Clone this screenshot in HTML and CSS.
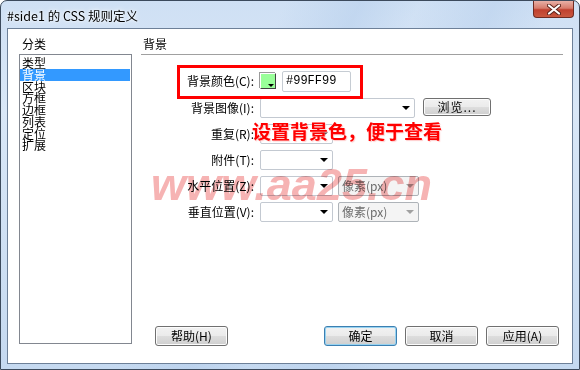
FILE: index.html
```html
<!DOCTYPE html>
<html lang="zh-CN">
<head>
  <meta charset="UTF-8">
  <title>#side1 的 CSS 规则定义</title>
  <link rel="stylesheet" href="styles.css">
</head>
<body>
  <div class="window">
    <div class="titlebar">
      <span class="title">#side1 的 CSS 规则定义</span>
      <div class="close">
        <svg width="14" height="11" viewBox="0 0 14 11">
          <path d="M2 1.5 L12 9.5 M12 1.5 L2 9.5" stroke="#5a2118" stroke-width="4" stroke-linecap="round"/>
          <path d="M2 1.5 L12 9.5 M12 1.5 L2 9.5" stroke="#fff" stroke-width="2.2" stroke-linecap="round"/>
        </svg>
      </div>
    </div>
    <div class="client">
      <div class="cat-col">
        <div class="col-head">分类</div>
        <ul class="cat-list">
          <li>类型</li>
          <li class="selected">背景</li>
          <li>区块</li>
          <li>方框</li>
          <li>边框</li>
          <li>列表</li>
          <li>定位</li>
          <li>扩展</li>
        </ul>
      </div>
      <div class="panel">
        <div class="col-head panel-head">背景</div>
        <div class="form">
          <div class="row first">
            <label>背景颜色(C):</label>
            <span class="swatch"></span>
            <span class="text-input">#99FF99</span>
          </div>
          <div class="row">
            <label>背景图像(I):</label>
            <span class="select wide"><i class="arrow"></i></span>
            <span class="btn browse">浏览...</span>
          </div>
          <div class="row">
            <label>重复(R):</label>
            <span class="select"><i class="arrow"></i></span>
          </div>
          <div class="row">
            <label>附件(T):</label>
            <span class="select"><i class="arrow"></i></span>
          </div>
          <div class="row">
            <label>水平位置(Z):</label>
            <span class="select"><i class="arrow"></i></span>
            <span class="select unit">像素(px)<i class="arrow"></i></span>
          </div>
          <div class="row">
            <label>垂直位置(V):</label>
            <span class="select"><i class="arrow"></i></span>
            <span class="select unit">像素(px)<i class="arrow"></i></span>
          </div>

          <!-- annotation marks drawn over the dialog -->
          <div class="mark-box"></div>
          <div class="note">设置背景色，便于查看</div>
          <div class="watermark">www.aa25.cn</div>
        </div>
        <div class="actions">
          <span class="btn">帮助(H)</span>
          <span class="spacer"></span>
          <span class="btn default">确定</span>
          <span class="btn">取消</span>
          <span class="btn">应用(A)</span>
        </div>
      </div>
    </div>
  </div>
</body>
</html>
```

FILE: styles.css
```css
body {
  margin: 0;
  background: #fff;
  font-family: "Noto Sans CJK SC", "Liberation Sans", sans-serif;
  font-size: 12px;
  color: #000;
}
.window {
  width: 580px;
  height: 370px;
  box-sizing: border-box;
  border: 1px solid #3c4a5c;
  border-radius: 7px 7px 0 0;
  padding: 0 6px 5px 6px;
  background:
    linear-gradient(115deg, rgba(255,255,255,0) 0%, rgba(255,255,255,0) 38%, rgba(180,205,235,0.5) 48%, rgba(255,255,255,0) 56%, rgba(180,205,235,0.45) 66%, rgba(255,255,255,0) 74%),
    linear-gradient(to bottom, #cfe0f4, #d9e7f7 30%, #c5d9f0);
  display: flex;
  flex-direction: column;
}
.titlebar {
  height: 27px;
  display: flex;
  align-items: flex-start;
  justify-content: space-between;
}
.title {
  margin-top: 5px;
  font-size: 12.5px;
  text-shadow: 0 0 6px #fff, 0 0 3px #fff;
}
.close {
  width: 41px;
  height: 17px;
  margin-right: -1px;
  box-sizing: border-box;
  border: 1px solid #6e2b22;
  border-top: none;
  border-radius: 0 0 4px 4px;
  background: linear-gradient(to bottom, #e8b0a6, #d77c6c 45%, #c0402e 55%, #c9583f);
  display: flex;
  align-items: center;
  justify-content: center;
}
.client {
  flex: 1;
  background: #fff;
  border: 1px solid #6d8098;
  padding: 7px 0 19px 0;
  display: flex;
}
.col-head {
  line-height: 16px;
  height: 16px;
}
.cat-col {
  margin-left: 11px;
  width: 113px;
  display: flex;
  flex-direction: column;
}
.cat-col .col-head {
  padding-left: 3px;
  margin-bottom: 2px;
}
.cat-list {
  flex: 1;
  list-style: none;
  margin: 0;
  padding: 2px 0 0 0;
  border: 1px solid #828790;
}
.cat-list li {
  height: 11.75px;
  line-height: 12px;
  padding-left: 2px;
  margin: 0 1px 0 0;
}
.cat-list li.selected {
  background: #3399ff;
  color: #fff;
}
.panel {
  margin-left: 9px;
  width: 422px;
  display: flex;
  flex-direction: column;
}
.panel-head {
  padding: 0 0 1px 2px;
  height: 17px;
  border-bottom: 1px solid #a0a0a0;
}
.form {
  position: relative;
  padding-top: 16px;
  display: flex;
  flex-direction: column;
  gap: 5px;
}
.row {
  height: 21px;
  display: flex;
  align-items: flex-start;
}
.row.first {
  margin-bottom: 1px;
}
.row label {
  width: 115px;
  box-sizing: border-box;
  padding-right: 2px;
  text-align: right;
  line-height: 20px;
  margin-right: 4px;
}
.swatch {
  width: 16px;
  height: 16px;
  margin-top: 2px;
  margin-right: 6px;
  box-sizing: border-box;
  border: 1px solid #fff;
  border-right-color: #404040;
  border-bottom-color: #404040;
  box-shadow: -1px -1px 0 #9a9a9a;
  background: #99ff99;
  position: relative;
}
.swatch::after {
  content: "";
  position: absolute;
  right: 1px;
  bottom: 1px;
  border-left: 3px solid transparent;
  border-right: 3px solid transparent;
  border-top: 3px solid #000;
}
.text-input {
  width: 69px;
  height: 21px;
  box-sizing: border-box;
  border: 1px solid #c6ccd3;
  border-radius: 2px;
  padding-left: 3px;
  font-family: "Liberation Mono", monospace;
  font-size: 12px;
  line-height: 19px;
}
.select {
  width: 73px;
  height: 20px;
  box-sizing: border-box;
  border: 1px solid #c3c9d1;
  border-radius: 2px;
  position: relative;
}
.select.wide {
  width: 155px;
  margin-right: 8px;
}
.select.unit {
  width: 81px;
  margin-left: 5px;
  background: #f4f4f4;
  border-color: #aeb3b8;
  color: #6d6d6d;
  padding-left: 3px;
  line-height: 18px;
}
.arrow {
  position: absolute;
  right: 4px;
  top: 7px;
  border-left: 4px solid transparent;
  border-right: 4px solid transparent;
  border-top: 4px solid #000;
}
.unit .arrow {
  border-top-color: #a0a0a0;
}
.btn {
  width: 73px;
  height: 20px;
  box-sizing: border-box;
  border: 1px solid #707070;
  border-radius: 3px;
  background: linear-gradient(to bottom, #f2f2f2, #ebebeb 48%, #dddddd 52%, #cfcfcf);
  box-shadow: inset 0 0 0 1px #fcfcfc;
  text-align: center;
  line-height: 18px;
}
.btn.browse {
  width: 68px;
  height: 18px;
  line-height: 16px;
  letter-spacing: 1px;
}
.btn.default {
  border-color: #3c7fb1;
  box-shadow: inset 0 0 0 1px #97d3f1;
}
.actions {
  margin-top: auto;
  margin-bottom: -2px;
  padding: 0 4px 0 14px;
  display: flex;
  gap: 8px;
}
.spacer {
  flex: 1;
}
.mark-box {
  position: absolute;
  left: 36px;
  top: 10px;
  width: 186px;
  height: 34px;
  box-sizing: border-box;
  border: 3px solid #ff0000;
}
.note {
  position: absolute;
  left: 111px;
  top: 65px;
  font-size: 19px;
  line-height: 22px;
  font-weight: bold;
  color: #ff0000;
  text-shadow: 1px 1px 1px #ffcccc;
  white-space: nowrap;
}
.watermark {
  position: absolute;
  left: 10px;
  top: 107px;
  font-family: "Liberation Sans", sans-serif;
  font-size: 45px;
  line-height: 45px;
  font-weight: bold;
  font-style: italic;
  color: #f6b3b3;
  mix-blend-mode: multiply;
  white-space: nowrap;
}
```
